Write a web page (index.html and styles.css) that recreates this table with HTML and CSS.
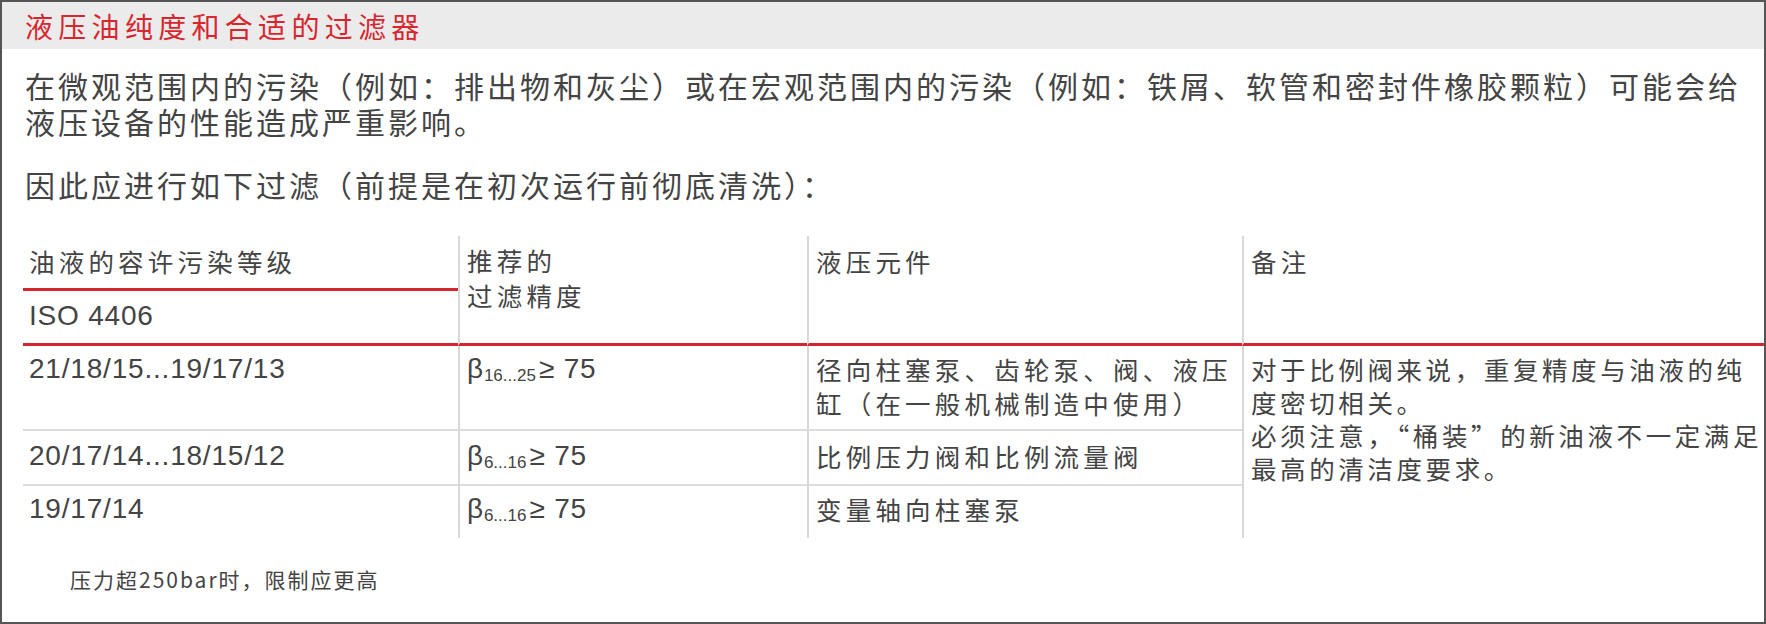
FILE: index.html
```html
<!DOCTYPE html>
<html lang="zh-CN">
<head>
<meta charset="utf-8">
<title>液压油纯度和合适的过滤器</title>
<link rel="stylesheet" href="styles.css">
</head>
<body>
<div class="frame">
  <div class="title-bar"><h1 class="title">液压油纯度和合适的过滤器</h1></div>
  <p class="para first">在微观范围内的污染（例如：排出物和灰尘）或在宏观范围内的污染（例如：铁屑、软管和密封件橡胶颗粒）可能会给<br>液压设备的性能造成严重影响。</p>
  <p class="para second">因此应进行如下过滤（前提是在初次运行前彻底清洗）：</p>
  <div class="grid">
    <div class="cell h1a">油液的容许污染等级</div>
    <div class="cell h1b num">ISO 4406</div>
    <div class="cell h2 div">推荐的<br>过滤精度</div>
    <div class="cell h3 div">液压元件</div>
    <div class="cell h4 div">备注</div>

    <div class="cell r1 c1 num sep">21/18/15...19/17/13</div>
    <div class="cell r1 c2 num sep div">β<sub>16...25</sub>≥ 75</div>
    <div class="cell r1 c3 sep div">径向柱塞泵、齿轮泵、阀、液压<br>缸（在一般机械制造中使用）</div>
    <div class="cell note div">对于比例阀来说，重复精度与油液的纯<br>度密切相关。<br>必须注意，“桶装”的新油液不一定满足<br>最高的清洁度要求。</div>

    <div class="cell r2 c1 num sep">20/17/14...18/15/12</div>
    <div class="cell r2 c2 num sep div">β<sub>6...16</sub>≥ 75</div>
    <div class="cell r2 c3 sep div">比例压力阀和比例流量阀</div>

    <div class="cell r3 c1 num">19/17/14</div>
    <div class="cell r3 c2 num div">β<sub>6...16</sub>≥ 75</div>
    <div class="cell r3 c3 div">变量轴向柱塞泵</div>
  </div>
  <p class="footnote">压力超250bar时，限制应更高</p>
</div>
</body>
</html>
```
FILE: styles.css
```css
html, body {
  margin: 0;
  padding: 0;
  background: #ffffff;
}
body {
  font-family: "Liberation Sans", "Noto Sans CJK SC", sans-serif;
  color: #444444;
}
.frame {
  box-sizing: border-box;
  width: 1766px;
  height: 624px;
  border: 2px solid #555555;
  display: flex;
  flex-direction: column;
  overflow: hidden;
}
.title-bar {
  background: #ebebeb;
  height: 47px;
  display: flex;
  align-items: center;
  padding-left: 23px;
}
.title {
  margin: 0;
  font-weight: normal;
  font-family: "Noto Sans CJK SC", sans-serif;
  font-size: 28px;
  letter-spacing: 5.3px;
  line-height: 34px;
  color: #d7262e;
}
.para {
  margin: 0;
  padding-left: 23px;
  font-family: "Noto Sans CJK SC", sans-serif;
  font-size: 30px;
  letter-spacing: 3px;
  line-height: 36px;
  white-space: nowrap;
}
.para.first { margin-top: 18px; }
.para.second { margin-top: 27px; }

.grid {
  margin-top: 34px;
  margin-left: 21px;
  display: grid;
  grid-template-columns: 435px 349px 435px 1fr;
  grid-template-rows: 55px 55px 85px 55px 52px;
  font-family: "Noto Sans CJK SC", sans-serif;
  font-size: 25.5px;
  letter-spacing: 4.2px;
  line-height: 34px;
}
.cell {
  box-sizing: border-box;
  padding: 8px 6px 0 6px;
  white-space: nowrap;
}
.div {
  border-left: 2px solid #d8d8d8;
  padding-left: 7px;
}
.num {
  font-family: "Liberation Sans", sans-serif;
  font-size: 28px;
  letter-spacing: 0.8px;
}
.num sub {
  font-size: 17px;
  letter-spacing: 0;
  vertical-align: -3px;
  line-height: 0;
  margin-right: 3px;
}
.h1a { grid-column: 1; grid-row: 1; border-bottom: 3px solid #d3262e; }
.h1b { grid-column: 1; grid-row: 2; border-bottom: 3px solid #d3262e; }
.h2 { grid-column: 2; grid-row: 1 / 3; border-bottom: 3px solid #d3262e; padding-top: 6px; line-height: 35px; }
.h3 { grid-column: 3; grid-row: 1 / 3; border-bottom: 3px solid #d3262e; }
.h4 { grid-column: 4; grid-row: 1 / 3; border-bottom: 3px solid #d3262e; }

.sep { border-bottom: 2px solid #dcdcdc; }
.r1 { grid-row: 3; padding-top: 6px; }
.r2 { grid-row: 4; padding-top: 8px; }
.r3 { grid-row: 5; padding-top: 6px; }
.c1 { grid-column: 1; }
.c2 { grid-column: 2; }
.c3 { grid-column: 3; }
.note {
  grid-column: 4;
  grid-row: 3 / 6;
  padding-top: 6px;
  line-height: 33px;
  letter-spacing: 3.6px;
}
.footnote {
  margin: 27px 0 0 0;
  padding-left: 68px;
  font-family: "Noto Sans CJK SC", sans-serif;
  font-size: 21px;
  letter-spacing: 2px;
  line-height: 28px;
}
```
